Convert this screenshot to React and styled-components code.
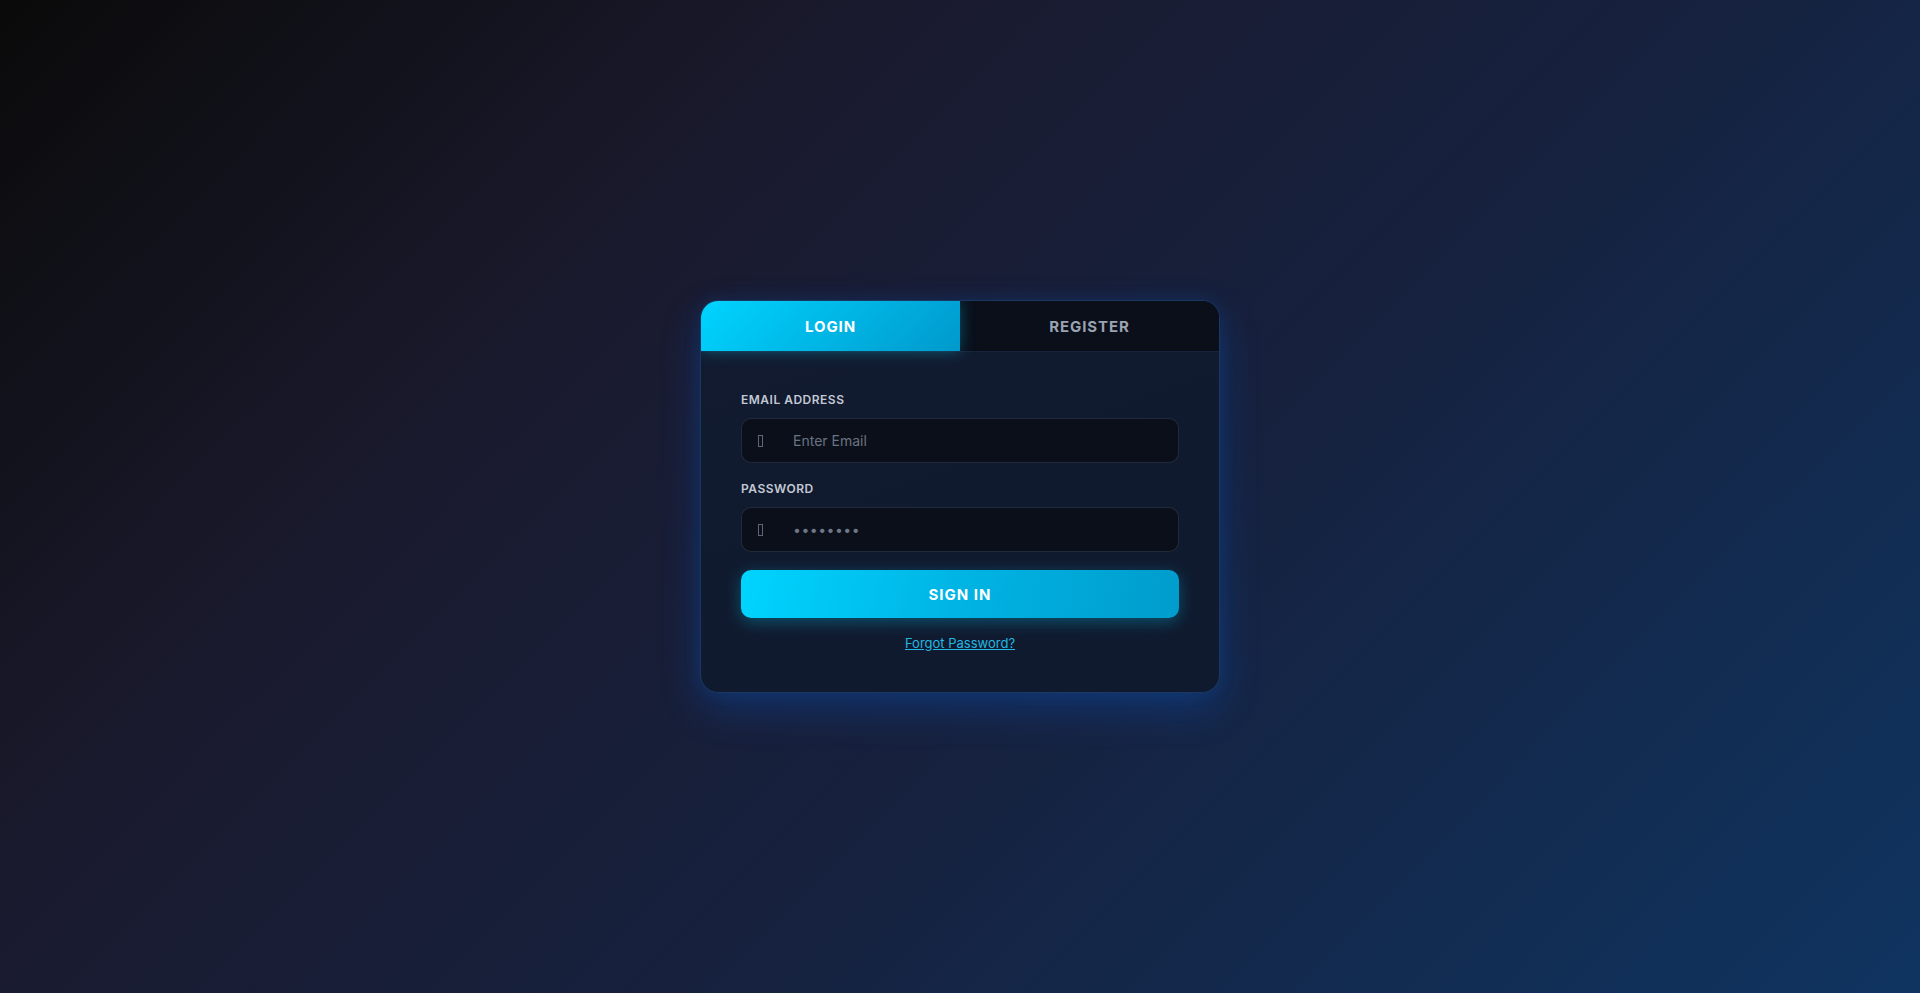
import React from "react";
import styled, { createGlobalStyle } from "styled-components";

const Global = createGlobalStyle`
  * { box-sizing: border-box; }
  html, body { margin: 0; padding: 0; height: 100%; }
  body {
    font-family: Inter, "Noto Sans", "Liberation Sans", sans-serif;
    background: #0f1629;
  }
  #root { height: 100%; }
`;

const Page = styled.main`
  min-height: 993px;
  height: 100vh;
  display: flex;
  align-items: center;
  justify-content: center;
  background: linear-gradient(135deg, #0a0a0a 0%, #1a1a2e 30%, #16213e 58%, #0f3460 100%);
`;

const Card = styled.section`
  width: 520px;
  border-radius: 18px;
  background: linear-gradient(160deg, #121b30 0%, #0f1a2e 100%);
  border: 1px solid rgba(40, 90, 160, 0.45);
  box-shadow: 0 16px 40px rgba(0, 110, 255, 0.24), 0 0 18px rgba(0, 140, 255, 0.1);
  overflow: hidden;
`;

const Tabs = styled.div`
  display: grid;
  grid-template-columns: 1fr 1fr;
  height: 51px;
  border-bottom: 1px solid rgba(60, 100, 160, 0.25);
  background: #0a0f1a;
`;

const Tab = styled.button`
  border: none;
  margin: 0;
  font-family: Inter, "Liberation Sans", sans-serif;
  font-size: 15px;
  font-weight: 700;
  letter-spacing: 0.9px;
  text-transform: uppercase;
  cursor: pointer;
  color: ${(p) => (p.$active ? "#ffffff" : "#9aa3b2")};
  background: ${(p) =>
    p.$active ? "linear-gradient(135deg, #00d4ff 0%, #0099cc 100%)" : "#0a0f1a"};
  box-shadow: ${(p) => (p.$active ? "0 0 14px rgba(0, 212, 255, 0.35)" : "none")};
  position: relative;
  z-index: ${(p) => (p.$active ? 1 : 0)};
`;

const Form = styled.form`
  padding: 40px 40px 41px;
  display: flex;
  flex-direction: column;
`;

const Field = styled.div`
  display: flex;
  flex-direction: column;
  gap: 10px;
  margin-bottom: 18px;
`;

const Label = styled.label`
  font-size: 12px;
  line-height: 16px;
  font-weight: 600;
  letter-spacing: 0.5px;
  color: #c3c9d4;
  text-transform: uppercase;
`;

const InputWrap = styled.div`
  display: flex;
  align-items: center;
  height: 45px;
  border-radius: 10px;
  background: #0a0f1a;
  border: 1px solid rgba(120, 140, 170, 0.22);
  padding-left: 16px;
`;

const IconBox = styled.span`
  width: 5px;
  height: 12px;
  border: 1px solid #5e6677;
  margin-right: 30px;
  flex: none;
`;

const Input = styled.input`
  flex: 1;
  background: transparent;
  border: none;
  outline: none;
  height: 100%;
  font-family: Inter, "Liberation Sans", sans-serif;
  font-size: 14px;
  color: #6f7787;
  padding: 0;
  letter-spacing: ${(p) => (p.type === "password" ? "0.5px" : "0")};
  &::placeholder { color: #6b7382; }
`;

const Button = styled.button`
  height: 48px;
  border: none;
  border-radius: 10px;
  background: linear-gradient(100deg, #00d4ff 0%, #00b4e4 50%, #009ccc 100%);
  color: #ffffff;
  font-family: Inter, "Liberation Sans", sans-serif;
  font-size: 15px;
  font-weight: 700;
  letter-spacing: 1px;
  text-transform: uppercase;
  box-shadow: 0 4px 16px rgba(0, 212, 255, 0.3);
  cursor: pointer;
`;

const Forgot = styled.a`
  align-self: center;
  margin-top: 17px;
  font-size: 13px;
  line-height: 16px;
  color: #22b8e3;
  text-decoration: underline;
  cursor: pointer;
`;

export default function App() {
  return (
    <>
      <Global />
      <Page>
        <Card>
          <Tabs>
            <Tab type="button" $active>Login</Tab>
            <Tab type="button">Register</Tab>
          </Tabs>
          <Form onSubmit={(e) => e.preventDefault()}>
            <Field>
              <Label>Email Address</Label>
              <InputWrap>
                <IconBox />
                <Input type="email" placeholder="Enter Email" />
              </InputWrap>
            </Field>
            <Field>
              <Label>Password</Label>
              <InputWrap>
                <IconBox />
                <Input type="password" defaultValue="password" />
              </InputWrap>
            </Field>
            <Button type="submit">Sign In</Button>
            <Forgot>Forgot Password?</Forgot>
          </Form>
        </Card>
      </Page>
    </>
  );
}
